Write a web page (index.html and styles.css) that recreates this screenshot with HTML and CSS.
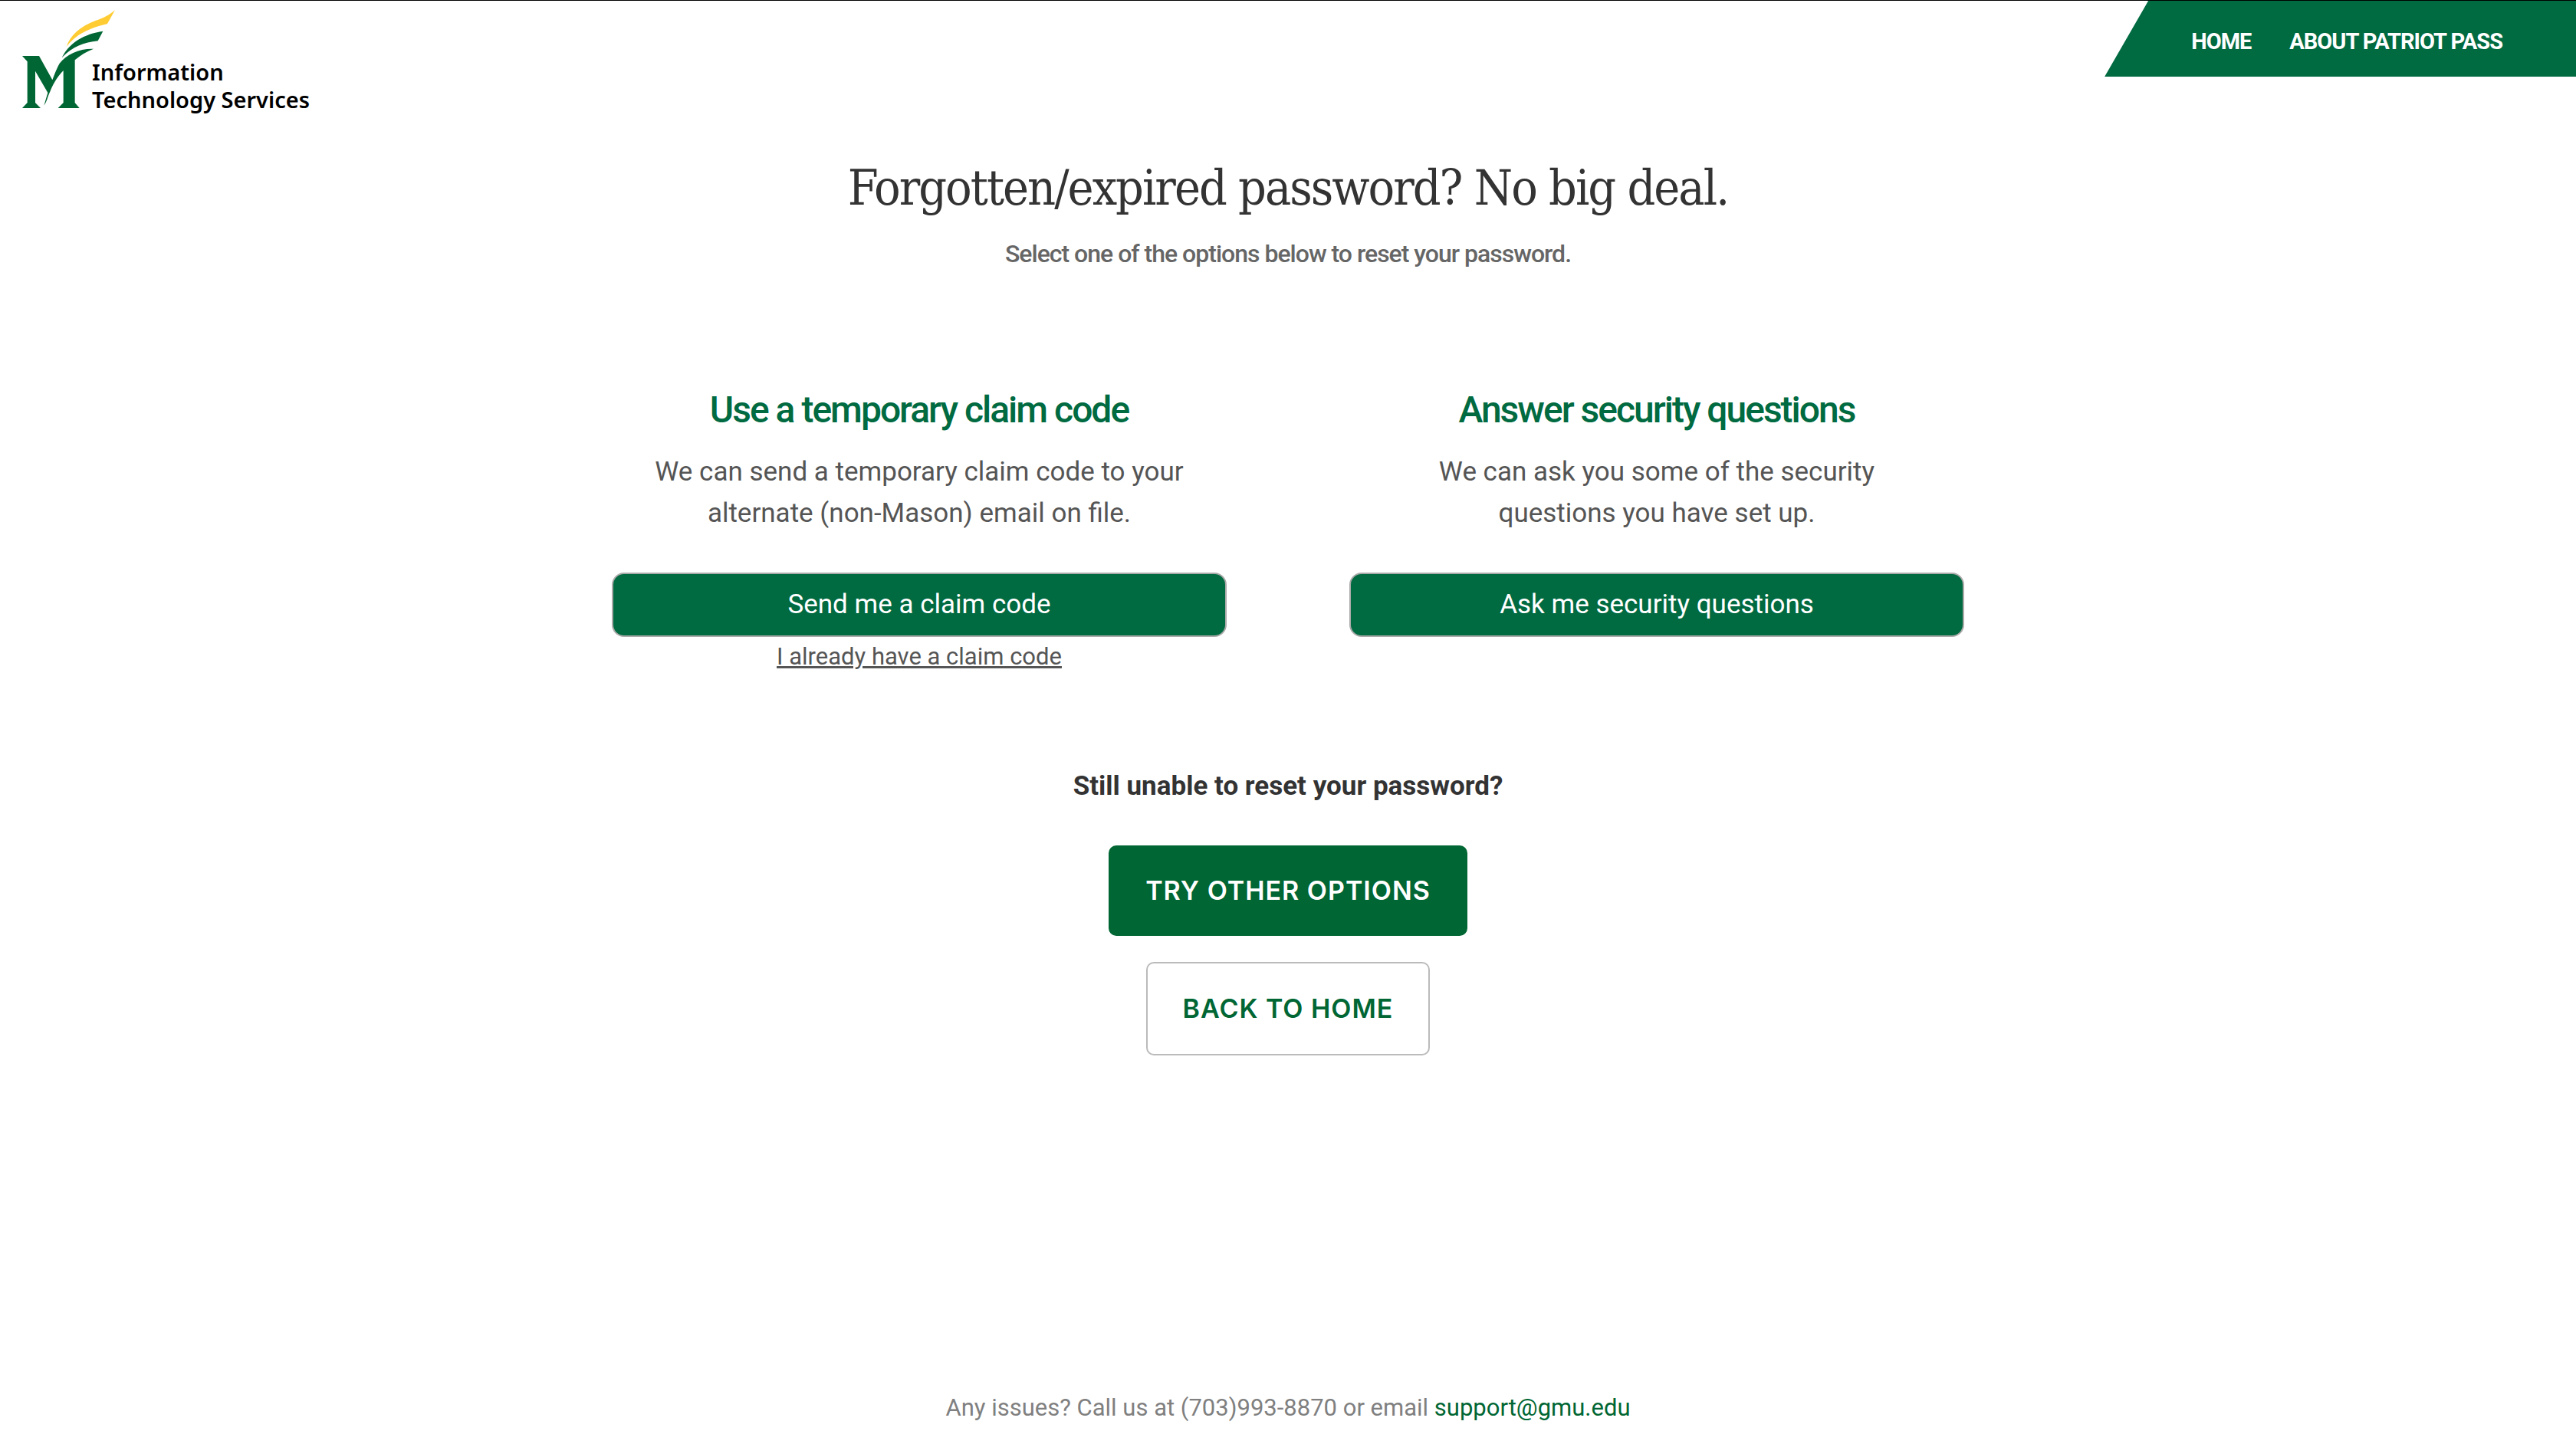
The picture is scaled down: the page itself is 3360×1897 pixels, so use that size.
FILE: index.html
```html
<!DOCTYPE html>
<html lang="en">
<head>
<meta charset="utf-8">
<meta name="viewport" content="width=device-width, initial-scale=1">
<title>Patriot Pass - Reset password</title>
<link rel="stylesheet" href="styles.css">
</head>
<body>
<header class="site-header">
  <a class="logo" href="#">
    <svg class="logo-mark" viewBox="84 36 375 390" aria-hidden="true">
      <path fill="#fc3" d="M450 39C430 57 405 71 373 81C315 103 275 137 260 183C300 132 348 111 420 93Z"/>
      <path fill="#063" d="M403 122C330 132 270 168 242 226C286 181 327 167 383 160Z"/>
      <path fill="#063" d="M87 219H153L205 313C214 288 222 268 233 248C260 212 312 189 366 191C338 202 315 216 293 235V402L311 423H227L248 402V276C219 306 204 337 195 361C187 376 183 400 172 413L187 363L138 278V402L159 423H87L107 402V241Z"/>
    </svg>
    <span class="logo-text">Information<br>Technology Services</span>
  </a>
  <nav class="site-nav">
    <a href="#">HOME</a>
    <a href="#">ABOUT PATRIOT PASS</a>
  </nav>
</header>
<main class="content">
  <h1 class="title">Forgotten/expired password? No big deal.</h1>
  <p class="subtitle">Select one of the options below to reset your password.</p>
  <div class="options">
    <section class="option">
      <h2>Use a temporary claim code</h2>
      <p>We can send a temporary claim code to your alternate (non-Mason) email on file.</p>
      <button class="option-button" type="button">Send me a claim code</button>
      <a class="claim-link" href="#">I already have a claim code</a>
    </section>
    <section class="option">
      <h2>Answer security questions</h2>
      <p>We can ask you some of the security questions you have set up.</p>
      <button class="option-button" type="button">Ask me security questions</button>
    </section>
  </div>
  <h3 class="more-title">Still unable to reset your password?</h3>
  <button class="action primary" type="button">TRY OTHER OPTIONS</button>
  <button class="action secondary" type="button">BACK TO HOME</button>
</main>
<footer class="site-footer">Any issues? Call us at (703)993-8870 or email <a href="#">support@gmu.edu</a></footer>
</body>
</html>
```
FILE: styles.css
```css
* { box-sizing: border-box; }
body {
  margin: 0;
  min-height: 100vh;
  display: flex;
  flex-direction: column;
  border-top: 1px solid #000;
  background: #fff;
  color: #555;
  font-family: Roboto, "Liberation Sans", sans-serif;
  font-size: 35px;
  line-height: 54px;
}
h1, h2, h3, p { margin: 0; }
button { font: inherit; cursor: pointer; }
.site-header {
  display: flex;
  justify-content: space-between;
  align-items: flex-start;
}
.logo {
  display: flex;
  align-items: flex-start;
  padding: 11px 0 0 28px;
  color: #000;
  text-decoration: none;
}
.logo-mark { width: 125px; height: 130px; }
.logo-text {
  margin: 64px 0 0 -33px;
  font-family: "Noto Sans", sans-serif;
  font-size: 29px;
  font-weight: 600;
  line-height: 36px;
}
.site-nav {
  display: flex;
  gap: 50px;
  height: 99px;
  padding: 27px 96px 0 113px;
  background: #006a41;
  clip-path: polygon(57px 0, 100% 0, 100% 100%, 0 100%);
  font-size: 29px;
  font-weight: 700;
  line-height: 52px;
  letter-spacing: -1px;
}
.site-nav a { color: #fff; text-decoration: none; }
.content {
  display: flex;
  flex-direction: column;
  align-items: center;
  padding-top: 57px;
  text-align: center;
}
.title {
  color: #333;
  font-family: "Roboto Slab", "DejaVu Serif Condensed", "DejaVu Serif", serif;
  font-size: 64px;
  font-weight: 400;
  line-height: 80px;
  letter-spacing: -2px;
}
.subtitle {
  margin-top: 22px;
  color: #666;
  font-size: 32px;
  font-weight: 500;
  line-height: 48px;
  letter-spacing: -1px;
}
.options {
  display: grid;
  grid-template-columns: 1fr 1fr;
  gap: 160px;
  width: 100%;
  max-width: 1764px;
  margin-top: 144px;
}
.option {
  display: flex;
  flex-direction: column;
  align-items: center;
}
.option h2 {
  color: #006a41;
  font-size: 48px;
  font-weight: 500;
  line-height: 72px;
  letter-spacing: -2px;
}
.option p { max-width: 720px; margin: 18px 0 50px; }
.option-button {
  width: 100%;
  padding: 13px;
  border: 2px solid #aaa;
  border-radius: 16px;
  background: #006a41;
  color: #fff;
}
.claim-link {
  margin-top: 2px;
  color: #555;
  font-size: 31px;
  line-height: 48px;
}
.more-title {
  margin: 118px 0 50px;
  color: #333;
  font-size: 35px;
  font-weight: 700;
}
.action {
  padding: 34px 46px;
  border: 2px solid #063;
  border-radius: 10px;
  font-family: Inter, sans-serif;
  font-size: 34px;
  font-weight: 600;
  line-height: 46px;
  letter-spacing: 1px;
}
.primary { background: #063; color: #fff; }
.secondary { margin-top: 34px; padding: 36px 46px; border-color: #bbb; background: #fff; color: #063; }
.site-footer {
  margin-top: auto;
  padding-bottom: 36px;
  color: #808080;
  font-size: 31px;
  line-height: 48px;
  text-align: center;
}
.site-footer a { color: #063; text-decoration: none; }
```
